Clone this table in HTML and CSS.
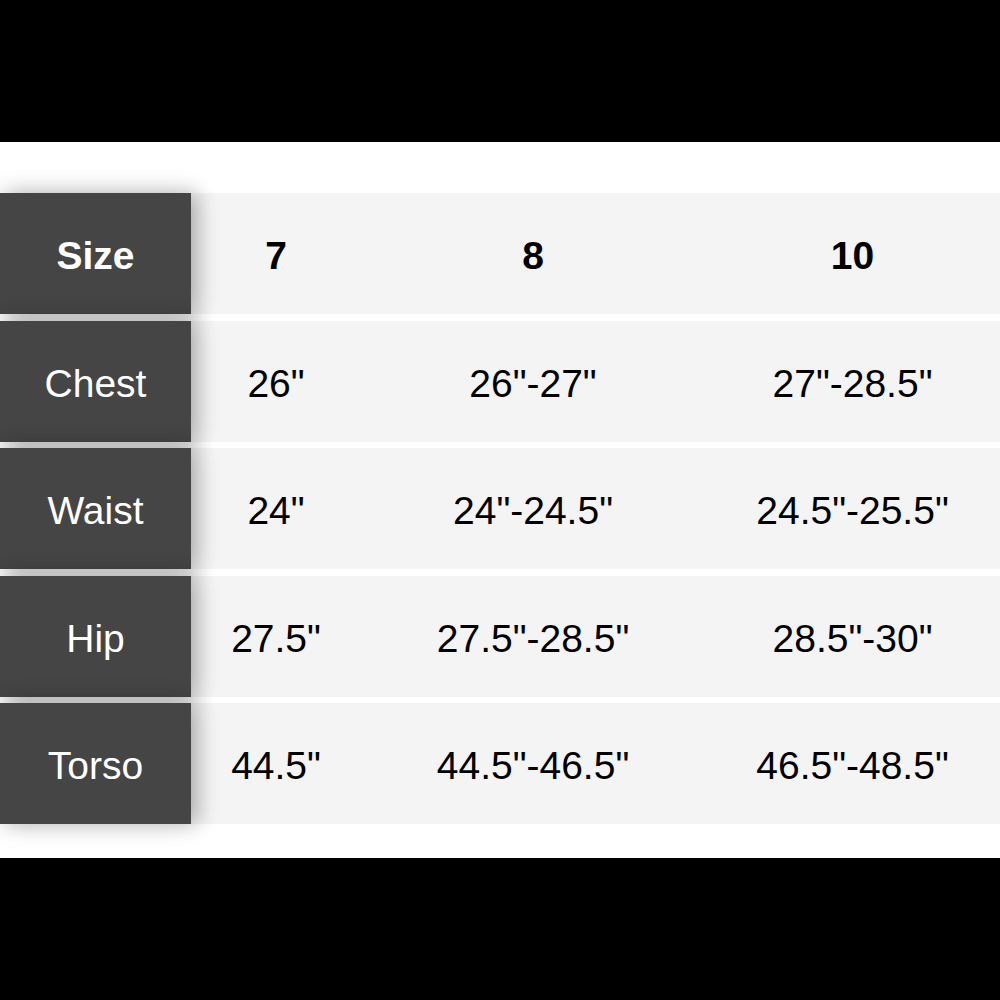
FILE: index.html
```html
<!DOCTYPE html>
<html>
<head>
<meta charset="utf-8">
<link rel="stylesheet" href="styles.css">
</head>
<body>
<div class="band"></div>
<div class="sheet">
  <div class="table">
    <div class="row head">
      <div class="label">Size</div>
      <div class="cells"><div class="c1">7</div><div class="c2">8</div><div class="c3">10</div></div>
    </div>
    <div class="row">
      <div class="label">Chest</div>
      <div class="cells"><div class="c1">26"</div><div class="c2">26"-27"</div><div class="c3">27"-28.5"</div></div>
    </div>
    <div class="row">
      <div class="label">Waist</div>
      <div class="cells"><div class="c1">24"</div><div class="c2">24"-24.5"</div><div class="c3">24.5"-25.5"</div></div>
    </div>
    <div class="row">
      <div class="label">Hip</div>
      <div class="cells"><div class="c1">27.5"</div><div class="c2">27.5"-28.5"</div><div class="c3">28.5"-30"</div></div>
    </div>
    <div class="row">
      <div class="label">Torso</div>
      <div class="cells"><div class="c1">44.5"</div><div class="c2">44.5"-46.5"</div><div class="c3">46.5"-48.5"</div></div>
    </div>
  </div>
</div>
<div class="band bottom"></div>
</body>
</html>
```
FILE: styles.css
```css
html, body {
  margin: 0;
  padding: 0;
  background: #000;
  font-family: "Liberation Sans", Arial, sans-serif;
}
.band {
  height: 142px;
  background: #000;
}
.band.bottom {
  height: 142px;
}
.sheet {
  background: #fff;
  height: 716px;
  box-sizing: border-box;
  padding-top: 51px;
  overflow: hidden;
}
.table {
  display: flex;
  flex-direction: column;
  gap: 6.5px;
}
.row {
  display: flex;
  height: 121px;
}
.label {
  width: 191px;
  flex: none;
  box-sizing: border-box;
  padding-top: 5px;
  background: #454545;
  color: #fff;
  font-size: 39px;
  display: flex;
  align-items: center;
  justify-content: center;
  position: relative;
  z-index: 1;
  box-shadow: 8px 0 18px rgba(0,0,0,0.22), 0 0 26px rgba(0,0,0,0.12);
}
.cells {
  flex: 1;
  display: flex;
  background: #f4f4f4;
  color: #000;
  font-size: 39px;
}
.cells > div {
  display: flex;
  align-items: center;
  justify-content: center;
  box-sizing: border-box;
  padding-top: 5px;
}
.c1 { width: 170px; }
.c2 { width: 344px; }
.c3 { flex: 1; }
.head .label, .head .cells {
  font-weight: bold;
}
```
